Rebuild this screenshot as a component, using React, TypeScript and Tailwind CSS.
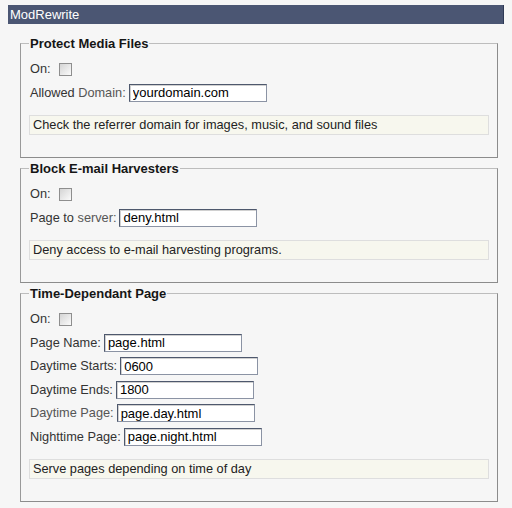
const FONT = "font-['Liberation_Sans',Arial,sans-serif]"

type Field = { label: React.ReactNode; value: string }

type Section = {
  title: string
  fields: Field[]
  help: string
}

const SECTIONS: Section[] = [
  {
    title: 'Protect Media Files',
    fields: [
      { label: <>Allowed <span className="text-[#555]">Domain:</span></>, value: 'yourdomain.com' },
    ],
    help: 'Check the referrer domain for images, music, and sound files',
  },
  {
    title: 'Block E-mail Harvesters',
    fields: [
      { label: <>Page to <span className="text-[#555]">server:</span></>, value: 'deny.html' },
    ],
    help: 'Deny access to e-mail harvesting programs.',
  },
  {
    title: 'Time-Dependant Page',
    fields: [
      { label: 'Page Name:', value: 'page.html' },
      { label: 'Daytime Starts:', value: '0600' },
      { label: 'Daytime Ends:', value: '1800' },
      { label: <span className="text-[#555]">Daytime Page:</span>, value: 'page.day.html' },
      { label: 'Nighttime Page:', value: 'page.night.html' },
    ],
    help: 'Serve pages depending on time of day',
  },
]

function Checkbox() {
  return (
    <span className="inline-block w-[13px] h-[13px] border border-[#8e8e8e] bg-gradient-to-br from-[#d4d4d4] to-[#fbfbfb]" />
  )
}

function TextBox({ value }: { value: string }) {
  return (
    <input
      type="text"
      defaultValue={value}
      readOnly
      className="w-[138px] h-[18px] px-[3px] bg-white text-[13px] leading-[16px] text-black border border-t-[#4e586d] border-l-[#4e586d] border-r-[#8b93a4] border-b-[#8b93a4] shadow-[inset_1px_1px_0_#d0d0d0] outline-none"
    />
  )
}

function SettingsGroup({ section }: { section: Section }) {
  return (
    <fieldset className="border border-t-[#bdbdbd] border-l-[#999] border-r-[#8c8c8c] border-b-[#8c8c8c] pl-[8px] pr-[8px] pt-[9.5px] pb-[22px]">
      <legend className="px-[1px] text-[13px] leading-[15px] font-bold text-[#151515]">
        {section.title}
      </legend>

      <div className="flex flex-col gap-[5.5px] pl-[1px]">
        {/* toggle */}
        <div className="flex items-center h-[18px] gap-[8px] text-[12.75px] text-[#333]">
          <span>On:</span>
          <Checkbox />
        </div>

        {section.fields.map((f, i) => (
          <div key={i} className="flex items-center h-[18px] gap-[3px] text-[12.75px] text-[#333]">
            <span>{f.label}</span>
            <TextBox value={f.value} />
          </div>
        ))}
      </div>

      <div className="mt-[13px] h-[20px] flex items-center px-[3px] bg-[#f7f7ee] border border-[#dedede] text-[12.75px] text-[#222]">
        {section.help}
      </div>
    </fieldset>
  )
}

export default function App() {
  return (
    <div className={`${FONT} w-[512px] h-[508px] bg-[#f6f6f6] pt-[5px] overflow-hidden`}>
      <div className="mx-[8px] h-[19px] bg-[#4b5673] border-r border-[#2f3a55] flex items-center px-[2px] text-[13px] text-white">
        ModRewrite
      </div>

      <div className="pl-[20px] pr-[14px] mt-[11.5px] flex flex-col gap-[3px]">
        {SECTIONS.map(s => (
          <SettingsGroup key={s.title} section={s} />
        ))}
      </div>
    </div>
  )
}
